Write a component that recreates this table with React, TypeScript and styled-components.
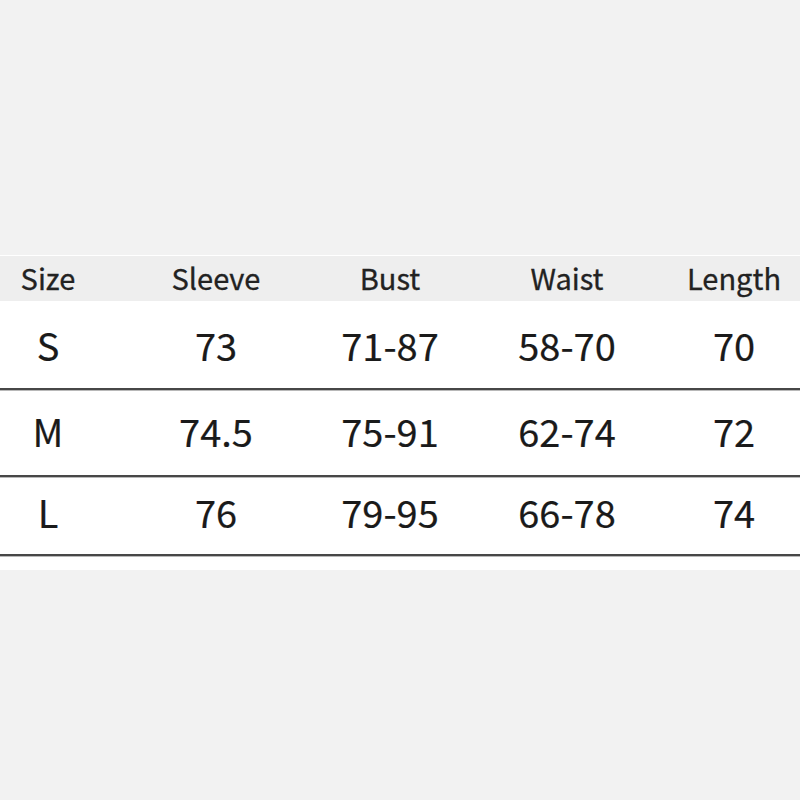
import styled, { createGlobalStyle } from "styled-components";

const GlobalStyle = createGlobalStyle`
  html, body {
    margin: 0;
    padding: 0;
    background: #f2f2f2;
  }
`

const columns = ['Size', 'Sleeve', 'Bust', 'Waist', 'Length']

// offset = distance from the row top to the top of the text box
const rows = [
    {size: 'S', values: ['S', '73', '71-87', '58-70', '70'], height: 89, offset: 25},
    {size: 'M', values: ['M', '74.5', '75-91', '62-74', '72'], height: 87, offset: 22},
    {size: 'L', values: ['L', '76', '79-95', '66-78', '74'], height: 79, offset: 16},
]

export default function App() {
    return (
        <>
            <GlobalStyle/>
            <Page>
                <Table>
                    <HeaderRow>
                        {columns.map(c => <HeadCell key={c}>{c}</HeadCell>)}
                    </HeaderRow>
                    {rows.map(r => (
                        <Row key={r.size} $height={r.height} $offset={r.offset}>
                            {r.values.map((v, i) => <Cell key={i}>{v}</Cell>)}
                        </Row>
                    ))}
                </Table>
            </Page>
        </>
    )
}

const Page = styled.div`
  height: 800px;
  padding-top: 255px;
  box-sizing: border-box;
  background: #f2f2f2;
  font-family: "Noto Sans CJK SC", "Noto Sans", sans-serif;
`

const Table = styled.div`
  border-top: 1px solid #ffffff;
  background: #ffffff;
  padding-bottom: 14px;
`

const grid = `
  display: grid;
  grid-template-columns: 96px 240px 108px 246px 88px;
  justify-items: center;
`

const HeaderRow = styled.div`
  ${grid};
  align-items: center;
  height: 45px;
  background: #eeeeee;
`

const HeadCell = styled.div`
  font-size: 29px;
  color: #222222;
  line-height: 1;
  padding-bottom: 3px;
  -webkit-text-stroke: 0.3px #222222;
`

const Row = styled.div<{ $height: number; $offset: number }>`
  ${grid};
  align-items: start;
  box-sizing: border-box;
  height: ${p => p.$height}px;
  padding-top: ${p => p.$offset}px;
  border-bottom: 2px solid #474747;
  box-shadow: 0 1px 0 #b8b8b8;
`

const Cell = styled.div`
  font-size: 38px;
  color: #1a1a1a;
  line-height: 1;
  -webkit-text-stroke: 0.2px #1a1a1a;
`
